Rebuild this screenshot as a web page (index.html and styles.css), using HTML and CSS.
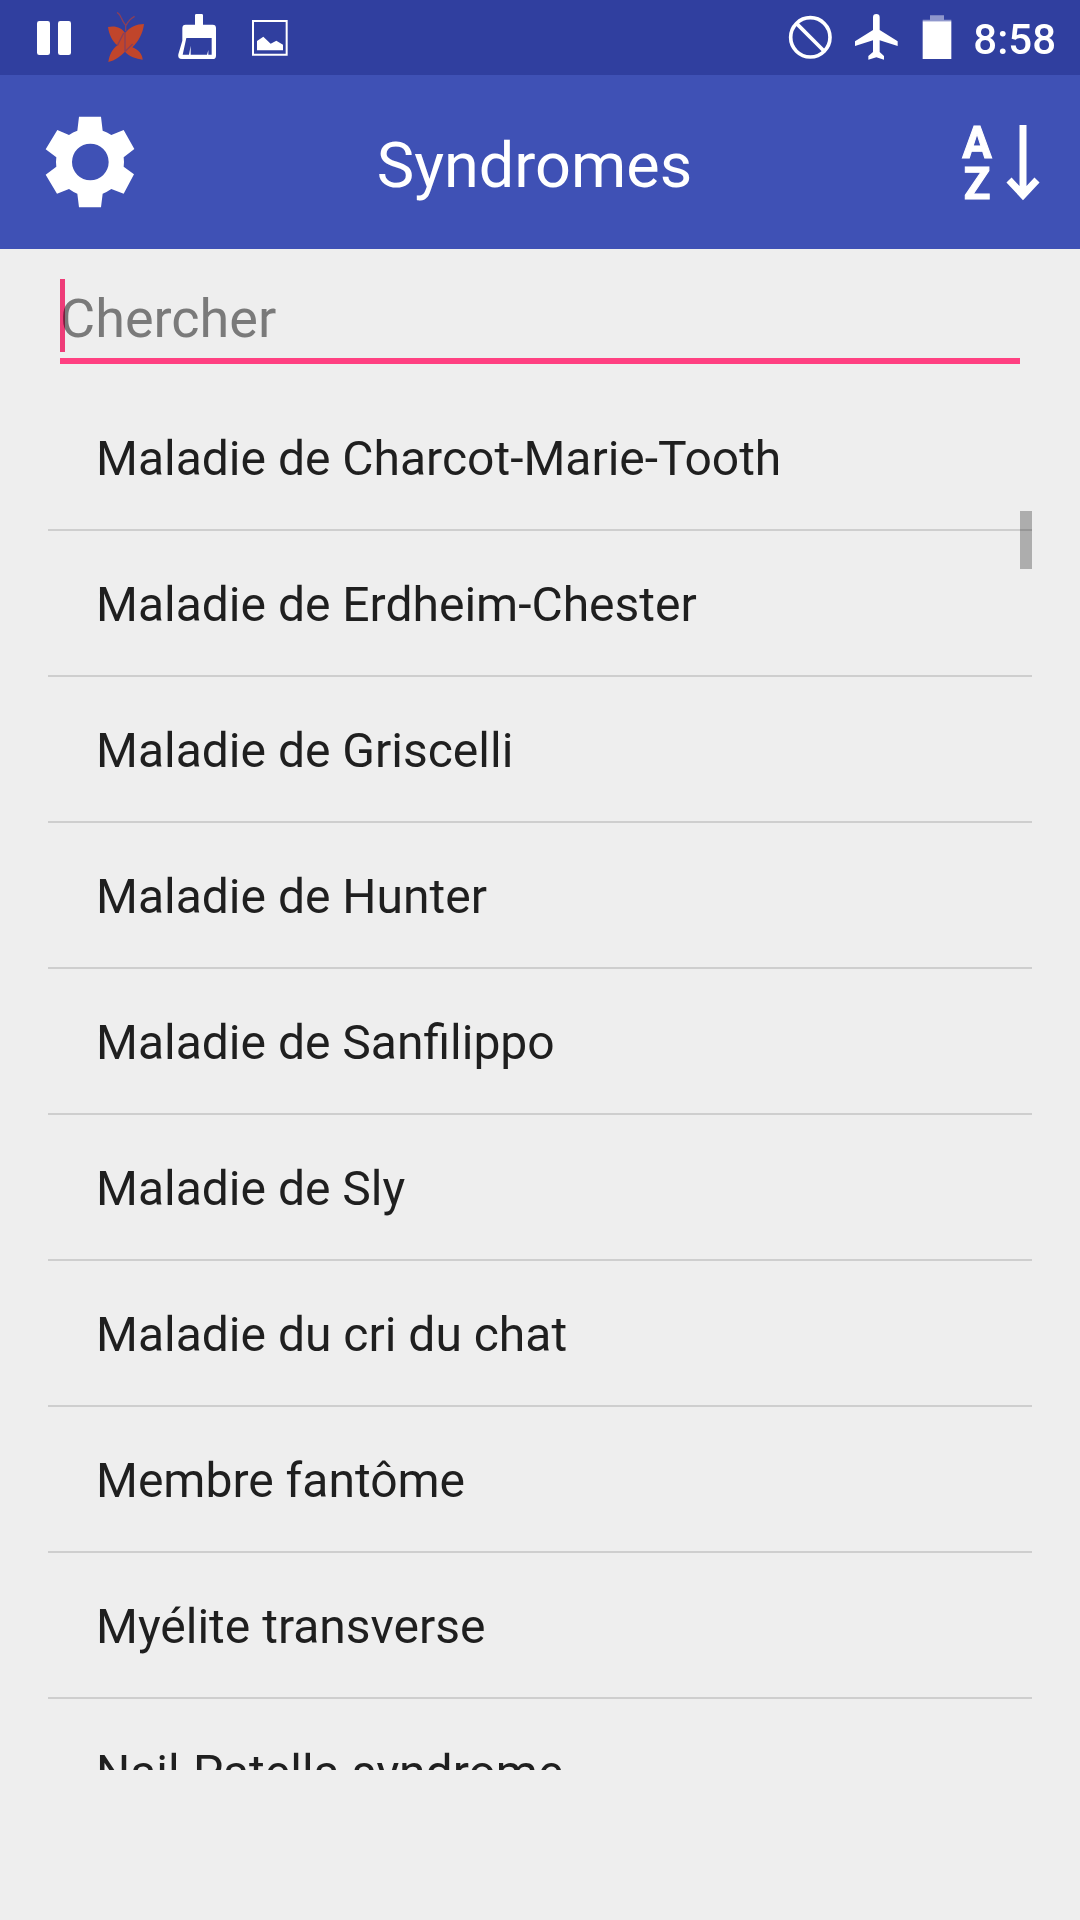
FILE: index.html
```html
<!DOCTYPE html>
<html lang="fr">
<head>
<meta charset="utf-8">
<meta name="viewport" content="width=device-width, initial-scale=1">
<title>Syndromes</title>
<link rel="stylesheet" href="styles.css">
</head>
<body>
<div class="app">
  <div class="status-bar">
    <div class="status-group">
      <svg class="status-icon" viewBox="54 0 216 225" aria-hidden="true">
        <rect x="111" y="63" width="39" height="102" rx="7"/>
        <rect x="174" y="63" width="39" height="102" rx="7"/>
      </svg>
      <svg class="status-icon butterfly" viewBox="270 0 216 225" aria-hidden="true">
        <path d="M324 81C345 76 365 82 375 99C390 81 410 72 432 72C429 101 414 126 397 142C416 149 427 163 428 179C408 176 388 170 375 155C362 169 345 181 325 186C328 164 337 148 352 136C337 124 327 104 324 81Z"/>
        <path class="butterfly-vein" d="M375 97V155M352 137L371 99M376 154L398 132"/>
        <path class="butterfly-antenna" d="M377 94V76C371 68 367 62 364 54Q360 42 351 37M378 76Q389 56 404 49"/>
      </svg>
      <svg class="status-icon" viewBox="486 0 216 225" aria-hidden="true">
        <path fill-rule="evenodd" d="M589 42H605Q609 42 609 46V74H638Q648 74 648 84V167Q648 177 638 177H546Q532 177 535 163L547 122V84Q547 74 557 74H585V46Q585 42 589 42ZM559 114L548 164H567L572 137V164H621L625 150V164H635V114Z"/>
      </svg>
      <svg class="status-icon" viewBox="702 0 216 225" aria-hidden="true">
        <path fill-rule="evenodd" d="M756 60H863V167H756ZM762 66V161H857V66Z"/>
        <path d="M771 151V123L790 110L812 131L829 122L849 134V151Z"/>
      </svg>
    </div>
    <div class="status-group">
      <svg class="status-icon status-icon-medium" viewBox="52 0 198 225" aria-hidden="true">
        <g class="blocked"><circle cx="152" cy="112" r="59"/><path d="M111 71L193 153"/></g>
      </svg>
      <svg class="status-icon status-icon-medium" viewBox="250 0 198 225" aria-hidden="true">
        <path d="M340 52Q340 42 350 42Q360 42 360 52V90L414 124V138L360 121V156L373 168V179L350 172L326 179V168L340 156V121L286 138V124L340 90Z"/>
      </svg>
      <svg class="status-icon status-icon-small" viewBox="448 0 150 225" aria-hidden="true">
        <path class="battery-empty" d="M511 46H553V59H575V64H489V59H511Z"/>
        <path d="M489 64H575V177H489Z"/>
      </svg>
      <time class="clock">8:58</time>
    </div>
  </div>

  <header class="toolbar">
    <button class="tool tool-settings" type="button" aria-label="Paramètres">
      <svg class="gear" viewBox="135 348 270 276" aria-hidden="true">
        <path fill-rule="evenodd" d="M237 350H303L308 392Q321 396 334 405L371 390L403 447L371 472Q373 486 371 500L402 523L371 581L334 567Q321 576 308 581L303 622H237L232 581Q219 576 207 567L171 581L137 524L169 500Q167 486 169 472L137 448L172 390L207 405Q219 396 232 392ZM271 431A55 55 0 1 0 271 541A55 55 0 1 0 271 431Z"/>
      </svg>
    </button>
    <h1 class="title">Syndromes</h1>
    <button class="tool tool-sort" type="button" aria-label="Trier de A à Z">
      <svg class="sort" viewBox="0 0 78 76" aria-hidden="true">
        <text class="sort-letter" x="15" y="34">A</text>
        <text class="sort-letter" x="15" y="75">Z</text>
        <path class="sort-arrow" d="M61 1V70M47 56L61 71L75 56"/>
      </svg>
    </button>
  </header>

  <main class="content">
    <div class="search">
      <input class="search-input" type="search" placeholder="Chercher" aria-label="Chercher">
      <span class="search-caret"></span>
    </div>
    <div class="list-area">
      <ul class="list">
        <li><a class="row" href="#">Maladie de Charcot-Marie-Tooth</a></li>
        <li><a class="row" href="#">Maladie de Erdheim-Chester</a></li>
        <li><a class="row" href="#">Maladie de Griscelli</a></li>
        <li><a class="row" href="#">Maladie de Hunter</a></li>
        <li><a class="row" href="#">Maladie de Sanfilippo</a></li>
        <li><a class="row" href="#">Maladie de Sly</a></li>
        <li><a class="row" href="#">Maladie du cri du chat</a></li>
        <li><a class="row" href="#">Membre fantôme</a></li>
        <li><a class="row" href="#">Myélite transverse</a></li>
        <li><a class="row" href="#">Nail-Patella syndrome</a></li>
      </ul>
      <span class="scroll-thumb"></span>
    </div>
  </main>
</div>
</body>
</html>
```
FILE: styles.css
```css
* {
  box-sizing: border-box;
}

body {
  margin: 0;
  background: #eeeeee;
  color: #1f1f1f;
  font-family: Roboto, "Noto Sans", sans-serif;
}

.app {
  display: flex;
  flex-direction: column;
  height: 100vh;
}

/* System status bar */
.status-bar {
  display: flex;
  flex: none;
  justify-content: space-between;
  padding: 0 24px 0 18px;
  background: #303f9f;
  color: #fff;
}

.status-group {
  display: flex;
  align-items: center;
}

.status-icon {
  display: block;
  width: 72px;
  height: 75px;
  fill: #fff;
}

.status-icon-medium {
  width: 66px;
}

.status-icon-small {
  width: 50px;
}

.butterfly {
  fill: #c1452b;
}

.butterfly-vein,
.butterfly-antenna {
  fill: none;
  stroke: #8a3f5a;
  stroke-width: 4;
}

.blocked {
  fill: none;
  stroke: #fff;
  stroke-width: 11;
}

.battery-empty {
  fill: #8f97cc;
}

.clock {
  margin-left: 14px;
  padding-top: 4px;
  font-size: 42px;
  font-weight: 500;
  line-height: 48px;
}

/* Toolbar */
.toolbar {
  display: flex;
  flex: none;
  align-items: center;
  height: 174px;
  background: #3f51b5;
  color: #fff;
}

.title {
  flex: 1;
  margin: 0;
  padding-top: 8px;
  font-size: 63px;
  font-weight: 400;
  line-height: 76px;
  text-align: center;
}

.tool {
  display: flex;
  align-items: center;
  height: 100%;
  border: 0;
  background: none;
}

.tool-settings {
  padding: 0 0 0 45px;
}

.tool-sort {
  padding: 0 40px 0 28px;
}

.gear {
  width: 90px;
  height: 92px;
  fill: #fff;
}

.sort {
  width: 78px;
  height: 76px;
  overflow: visible;
}

.sort-letter {
  fill: #fff;
  stroke: #fff;
  stroke-width: 1;
  font-family: Roboto, "Noto Sans", sans-serif;
  font-size: 44px;
  font-weight: 700;
  text-anchor: middle;
}

.sort-arrow {
  fill: none;
  stroke: #fff;
  stroke-width: 7;
}

/* Search field */
.content {
  display: flex;
  flex: 1;
  flex-direction: column;
  min-height: 0;
  padding: 30px 48px 150px;
}

.search {
  position: relative;
  margin: 0 12px 21px;
}

.search-input {
  display: block;
  width: 100%;
  height: 85px;
  padding: 0;
  border: 0;
  border-bottom: 6px solid #ff4081;
  border-radius: 0;
  outline: 0;
  appearance: none;
  background: none;
  color: #1f1f1f;
  caret-color: #ff4081;
  font: 54px/72px Roboto, "Noto Sans", sans-serif;
}

.search-input::placeholder {
  color: #7a7a7a;
  opacity: 1;
}

.search-caret {
  position: absolute;
  top: 0;
  left: 0;
  width: 5px;
  height: 73px;
  background: #ff4081;
  mix-blend-mode: multiply;
}

/* Syndrome list */
.list-area {
  position: relative;
  flex: 1;
  min-height: 0;
}

.list {
  height: 100%;
  margin: 0;
  padding: 0;
  overflow-y: auto;
  list-style: none;
  scrollbar-width: none;
}

.row {
  display: block;
  padding: 46px 48px 42px;
  border-bottom: 2px solid #cecece;
  color: inherit;
  font-size: 48px;
  line-height: 56px;
  text-decoration: none;
}

.scroll-thumb {
  position: absolute;
  top: 126px;
  right: 0;
  width: 12px;
  height: 58px;
  background: rgba(0, 0, 0, 0.27);
}
```
